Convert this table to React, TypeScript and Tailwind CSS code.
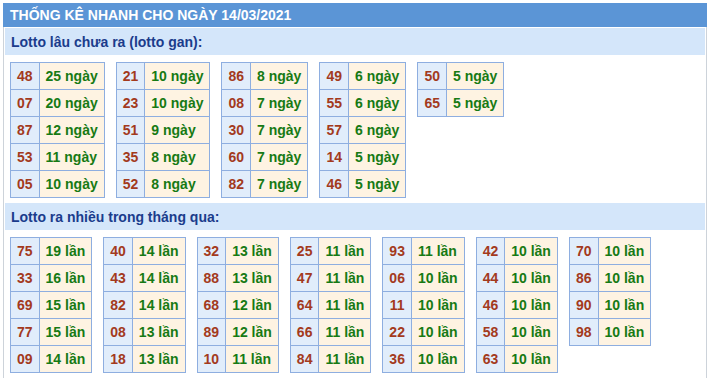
type Row = [string, string];

const gan: Row[][] = [
  [["48", "25"], ["07", "20"], ["87", "12"], ["53", "11"], ["05", "10"]],
  [["21", "10"], ["23", "10"], ["51", "9"], ["35", "8"], ["52", "8"]],
  [["86", "8"], ["08", "7"], ["30", "7"], ["60", "7"], ["82", "7"]],
  [["49", "6"], ["55", "6"], ["57", "6"], ["14", "5"], ["46", "5"]],
  [["50", "5"], ["65", "5"]],
];

const nhieu: Row[][] = [
  [["75", "19"], ["33", "16"], ["69", "15"], ["77", "15"], ["09", "14"]],
  [["40", "14"], ["43", "14"], ["82", "14"], ["08", "13"], ["18", "13"]],
  [["32", "13"], ["88", "13"], ["68", "12"], ["89", "12"], ["10", "11"]],
  [["25", "11"], ["47", "11"], ["64", "11"], ["66", "11"], ["84", "11"]],
  [["93", "11"], ["06", "10"], ["11", "10"], ["22", "10"], ["36", "10"]],
  [["42", "10"], ["44", "10"], ["46", "10"], ["58", "10"], ["63", "10"]],
  [["70", "10"], ["86", "10"], ["90", "10"], ["98", "10"]],
];

function LotoTable({ rows, unit }: { rows: Row[]; unit: string }) {
  return (
    <table className="border-collapse self-start">
      <tbody>
        {rows.map(([so, n]) => (
          <tr key={so} className="h-[27px]">
            <td className="border border-[#8eaee0] bg-[#e1edfb] px-[6px] text-center text-[#a33a1d]">{so}</td>
            <td className="border border-[#8eaee0] bg-[#fef3e2] px-[6px] text-[#177a14]">
              {n} {unit}
            </td>
          </tr>
        ))}
      </tbody>
    </table>
  );
}

function Section({ title, tables, unit }: { title: string; tables: Row[][]; unit: string }) {
  return (
    <div>
      <div className="h-[27px] bg-[#d4e6fa] pl-[6px] flex items-center text-[#1b3c8c]">{title}</div>
      <div className="flex gap-[11px] pl-[5px] pt-[7px] pb-[5px]">
        {tables.map((t, i) => (
          <LotoTable key={i} rows={t} unit={unit} />
        ))}
      </div>
    </div>
  );
}

export default function App() {
  return (
    <div className="w-[708px] h-[378px] bg-white pt-[3px] pl-[3px] overflow-hidden font-['Liberation_Sans',Arial,sans-serif] text-[14px] font-bold leading-none">
      <div className="w-[704px]">
        <div className="h-[24px] bg-[#5b95d6] text-white flex items-center pl-[7px]">THỐNG KÊ NHANH CHO NGÀY 14/03/2021</div>
        <div className="border-x border-[#cdd3da] px-[1px] pt-[1px] h-[360px]">
          <Section title="Lotto lâu chưa ra (lotto gan):" tables={gan} unit="ngày" />
          <Section title="Lotto ra nhiều trong tháng qua:" tables={nhieu} unit="lần" />
        </div>
      </div>
    </div>
  );
}
